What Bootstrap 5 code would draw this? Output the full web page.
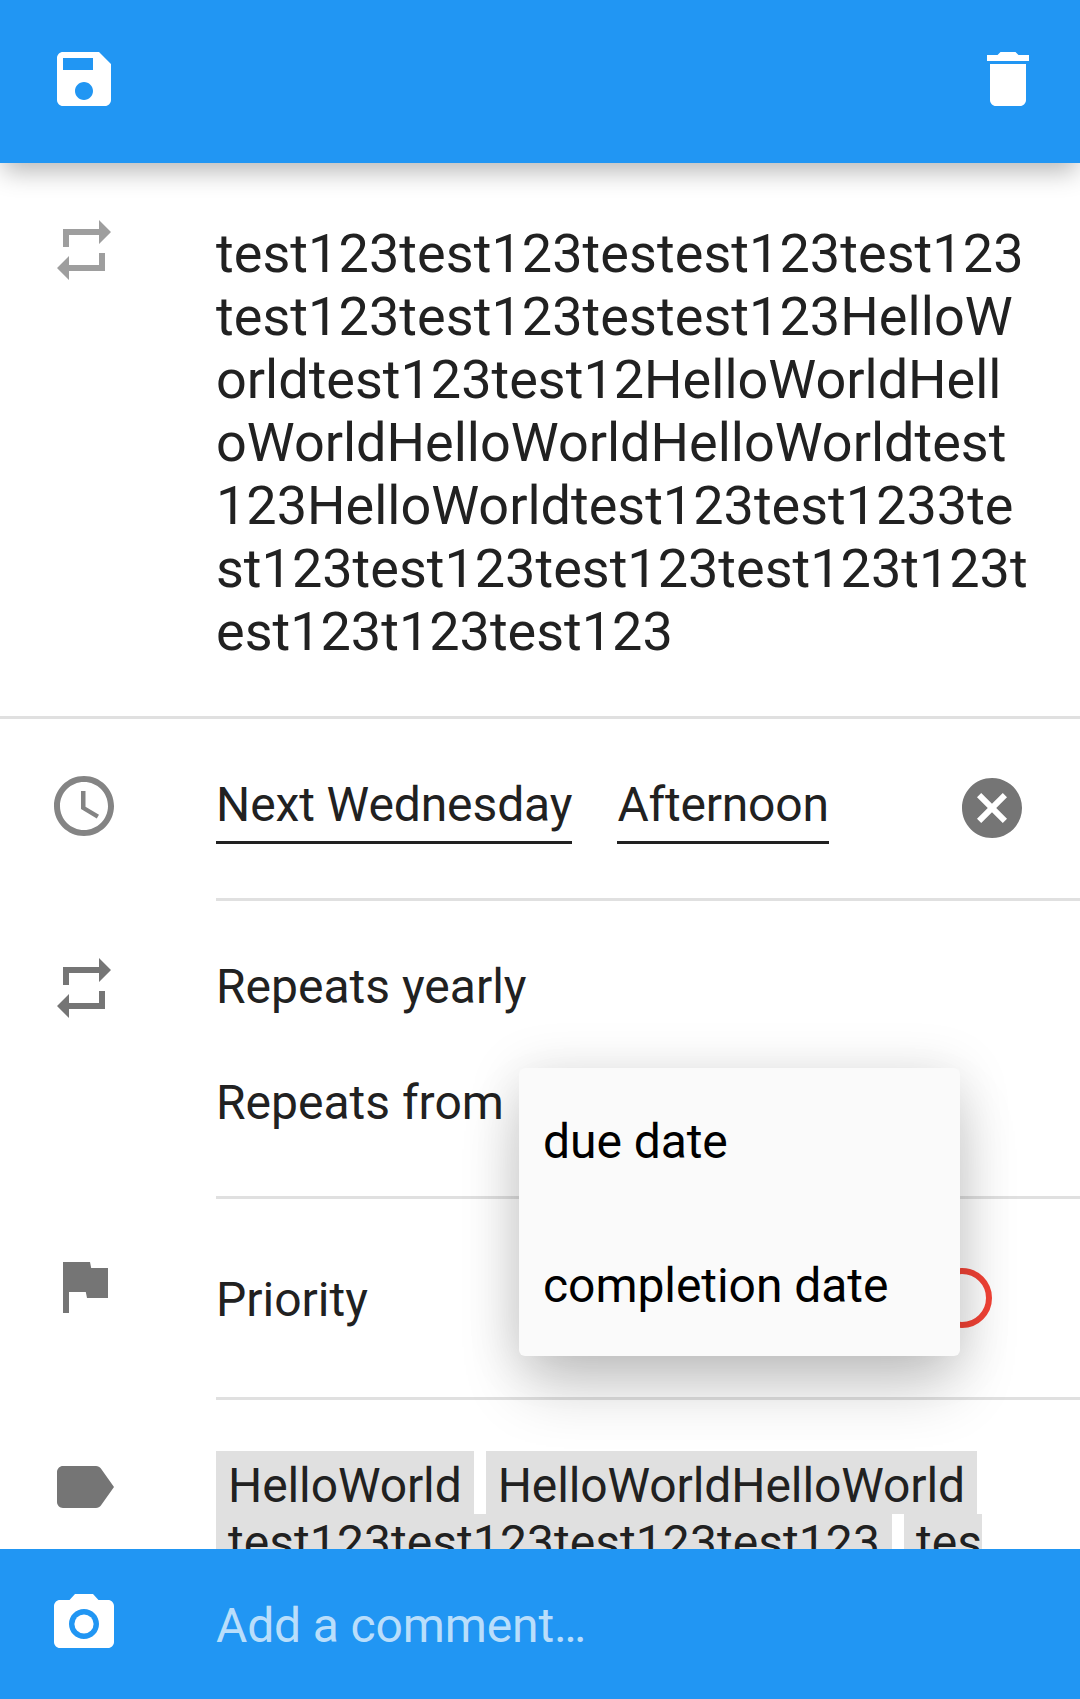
<!DOCTYPE html>
<html lang="en">
<head>
<meta charset="utf-8">
<meta name="viewport" content="width=device-width, initial-scale=1">
<title>Edit task</title>
<link href="https://cdn.jsdelivr.net/npm/bootstrap@5.3.0/dist/css/bootstrap.min.css" rel="stylesheet">
<style>
  body { font-family: Roboto, "Noto Sans", sans-serif; font-size: 48px; line-height: 56px; color: #212121; background: #fff; }
  .screen { width: 1080px; height: 1699px; }
  .bar { background: #2196f3; color: #fff; }
  .top-bar { height: 163px; padding: 43px 36px 0 48px; box-shadow: 0 11px 24px -3px rgba(0,0,0,.29); z-index: 2; }
  .bottom-bar { height: 150px; padding-top: 39px; z-index: 2; }
  .icon-btn { line-height: 0; }
  .ic { width: 72px; height: 72px; fill: currentColor; display: block; }
  .lead-col { width: 216px; padding-left: 48px; color: #757575; }
  .divided { border-bottom: 3px solid #e0e0e0; }
  .row-title { height: 556px; padding-top: 51px; }
  .row-title .lead-col { color: #9e9e9e; }
  .title-text { font-size: 54px; line-height: 63px; padding-top: 8px; }
  .loose { letter-spacing: .06px; }
  .snug { letter-spacing: -.1px; }
  .row-date { height: 182px; }
  .row-date .lead-col { padding-top: 51px; color: #848484; }
  .row-date .main-col { padding-top: 58px; padding-right: 52px; }
  .picker { border-bottom: 3px solid #212121; height: 67px; }
  .picker-time { letter-spacing: -.2px; }
  .pickers { gap: 45px; }
  .clear-btn { margin-top: -5px; color: #757575; }
  .row-repeat { height: 298px; }
  .row-repeat .lead-col { padding-top: 51px; }
  .row-repeat .main-col { padding-top: 58px; }
  .repeat-lines { gap: 60px; }
  .row-priority { height: 201px; }
  .row-priority .lead-col { padding-top: 51px; }
  .row-priority .main-col { padding: 69px 88px 0 0; }
  .ring { width: 60px; height: 60px; border: 6px solid #f44336; }
  .row-tags .lead-col { padding-top: 51px; }
  .row-tags .main-col { padding-top: 51px; }
  .tag-line { gap: 12px; }
  .tag { background: #e0e0e0; padding: 7px 12px 0; height: 63px; }
  .tag-line + .tag-line .tag { padding-top: 1px; }
  .tag.cut { padding-right: 0; }
  .popup-menu { left: 519px; top: 1068px; width: 441px; background: #fafafa; border-radius: 6px; color: #000; z-index: 1;
    box-shadow: 0 36px 60px -6px rgba(0,0,0,.2), 0 4px 54px rgba(0,0,0,.13); }
  .popup-menu li { height: 144px; padding: 4px 24px 0; letter-spacing: -.06px; }
  .row-tags .tag-line { position: relative; z-index: 2; }
  .hint { color: rgba(255,255,255,.7); padding-top: 10px; letter-spacing: -.13px; }
</style>
</head>
<body>
<svg class="d-none" xmlns="http://www.w3.org/2000/svg">
  <symbol id="repeat" viewBox="0 0 24 24"><path d="M7 7h10v3l4-4-4-4v3H5v6h2V7zm10 10H7v-3l-4 4 4 4v-3h12v-6h-2v4z"/></symbol>
</svg>
<div class="screen d-flex flex-column position-relative overflow-hidden">
  <header class="bar top-bar d-flex justify-content-between flex-shrink-0 position-relative">
    <a class="icon-btn text-white" href="#" aria-label="Save"><svg class="ic" viewBox="0 0 24 24"><path d="M17 3H5c-1.11 0-2 .9-2 2v14c0 1.1.89 2 2 2h14c1.1 0 2-.9 2-2V7l-4-4zm-5 16c-1.66 0-3-1.34-3-3s1.34-3 3-3 3 1.34 3 3-1.34 3-3 3zm3-10H5V5h10v4z"/></svg></a>
    <a class="icon-btn text-white" href="#" aria-label="Delete"><svg class="ic" viewBox="0 0 24 24"><path d="M6 19c0 1.1.9 2 2 2h8c1.1 0 2-.9 2-2V7H6v12zM19 4h-3.5l-1-1h-5l-1 1H5v2h14V4z"/></svg></a>
  </header>

  <main class="flex-grow-1 overflow-hidden">
    <section class="row-title divided d-flex">
      <div class="lead-col flex-shrink-0"><svg class="ic"><use href="#repeat"/></svg></div>
      <div class="title-text text-nowrap"><span class="loose">test123test123testest123test123<br>test123test123testest123HelloW</span><br>orldtest123test12HelloWorldHell<br>oWorldHelloWorldHelloWorldtest<br>123HelloWorldtest123test1233te<br>st123test123test123test123t123t<br>est123t123test123</div>
    </section>

    <section class="row-date d-flex">
      <div class="lead-col flex-shrink-0"><svg class="ic" viewBox="0 0 24 24"><path d="M11.99 2C6.47 2 2 6.48 2 12s4.47 10 9.99 10C17.52 22 22 17.52 22 12S17.52 2 11.99 2zM12 20c-4.42 0-8-3.58-8-8s3.58-8 8-8 8 3.58 8 8-3.58 8-8 8zm.5-13H11v6l5.25 3.15.75-1.23-4.5-2.67z"/></svg></div>
      <div class="main-col divided flex-grow-1 d-flex justify-content-between align-items-start">
        <div class="pickers d-flex text-nowrap">
          <div class="picker snug">Next Wednesday</div>
          <div class="picker picker-time">Afternoon</div>
        </div>
        <a class="icon-btn clear-btn" href="#" aria-label="Clear date"><svg class="ic" viewBox="0 0 24 24"><path d="M12 2C6.47 2 2 6.47 2 12s4.47 10 10 10 10-4.47 10-10S17.53 2 12 2zm5 13.59L15.59 17 12 13.41 8.41 17 7 15.59 10.59 12 7 8.41 8.41 7 12 10.59 15.59 7 17 8.41 13.41 12 17 15.59z"/></svg></a>
      </div>
    </section>

    <section class="row-repeat d-flex">
      <div class="lead-col flex-shrink-0"><svg class="ic"><use href="#repeat"/></svg></div>
      <div class="main-col divided flex-grow-1">
        <div class="repeat-lines d-flex flex-column">
          <div>Repeats yearly</div>
          <div>Repeats from</div>
        </div>
      </div>
    </section>

    <section class="row-priority d-flex">
      <div class="lead-col flex-shrink-0"><svg class="ic" viewBox="0 0 24 24"><path d="M14.4 6L14 4H5v17h2v-7h5.6l.4 2h7V6z"/></svg></div>
      <div class="main-col divided flex-grow-1 d-flex justify-content-between align-items-start">
        <div class="pt-1">Priority</div>
        <div class="ring rounded-circle"></div>
      </div>
    </section>

    <section class="row-tags d-flex">
      <div class="lead-col flex-shrink-0"><svg class="ic" viewBox="0 0 24 24"><path d="M17.63 5.84C17.27 5.33 16.67 5 16 5L5 5.01C3.9 5.01 3 5.9 3 7v10c0 1.1.9 1.99 2 1.99L16 19c.67 0 1.27-.33 1.63-.84L22 12l-4.37-6.16z"/></svg></div>
      <div class="main-col text-nowrap">
        <div class="tag-line d-flex snug"><span class="tag">HelloWorld</span><span class="tag">HelloWorldHelloWorld</span></div>
        <div class="tag-line d-flex loose"><span class="tag">test123test123test123test123</span><span class="tag cut">tes</span></div>
      </div>
    </section>
  </main>

  <footer class="bar bottom-bar d-flex flex-shrink-0 position-relative">
    <div class="lead-col text-white"><svg class="ic" viewBox="0 0 24 24"><circle cx="12" cy="12" r="3.2"/><path d="M9 2L7.17 4H4c-1.1 0-2 .9-2 2v12c0 1.1.9 2 2 2h16c1.1 0 2-.9 2-2V6c0-1.1-.9-2-2-2h-3.17L15 2H9zm3 15c-2.76 0-5-2.24-5-5s2.24-5 5-5 5 2.24 5 5-2.24 5-5 5z"/></svg></div>
    <div class="hint">Add a comment…</div>
  </footer>

  <ul class="popup-menu list-unstyled mb-0 position-absolute">
    <li class="d-flex align-items-center">due date</li>
    <li class="d-flex align-items-center">completion date</li>
  </ul>
</div>
<script src="https://cdn.jsdelivr.net/npm/bootstrap@5.3.0/dist/js/bootstrap.bundle.min.js"></script>
</body>
</html>
